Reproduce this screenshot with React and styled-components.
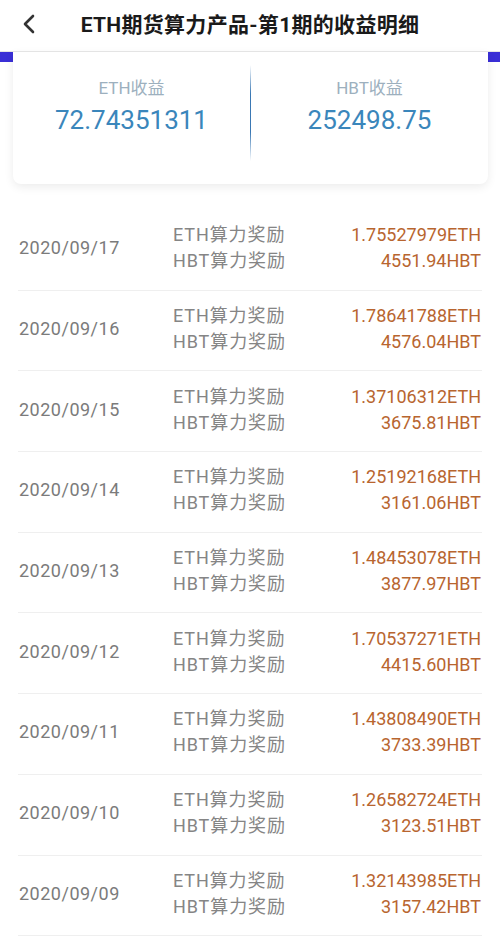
import React from 'react';
import styled, { createGlobalStyle } from 'styled-components';

const GlobalStyle = createGlobalStyle`
  body {
    margin: 0;
    background: #ffffff;
    font-family: Roboto, "Noto Sans CJK SC", sans-serif;
  }
`;

const Page = styled.div`
  width: 500px;
  min-height: 937px;
  background: #ffffff;
  overflow: hidden;
`;

const Header = styled.header`
  height: 51px;
  border-bottom: 1px solid #e4e4e4;
  display: flex;
  align-items: center;
  justify-content: center;
  position: relative;
`;

const BackButton = styled.button`
  position: absolute;
  left: 16px;
  top: 11px;
  width: 26px;
  height: 26px;
  padding: 0;
  border: none;
  background: transparent;
  display: flex;
  align-items: center;
  justify-content: center;
`;

const Title = styled.h1`
  margin: -5px 0 0;
  font-size: 21px;
  font-weight: 700;
  color: #1a1a1a;
  letter-spacing: 0.3px;
`;

const Banner = styled.div`
  background: linear-gradient(#3a2fd6 0 10px, transparent 10px);
  padding: 0 12px 0 13px;
`;

const SummaryCard = styled.section`
  height: 132px;
  background: #ffffff;
  border-radius: 0 0 8px 8px;
  box-shadow: 0 3px 10px rgba(0, 0, 0, 0.08);
  display: grid;
  grid-template-columns: 1fr 1px 1fr;
  align-items: start;
`;

const Stat = styled.div`
  display: flex;
  flex-direction: column;
  align-items: center;
  padding-top: 24px;
`;

const StatLabel = styled.span`
  font-size: 17px;
  color: #9db0be;
  line-height: 24px;
`;

const StatValue = styled.span`
  font-size: 26px;
  color: #3a86bb;
  line-height: 32px;
  margin-top: 4px;
`;

const Divider = styled.div`
  width: 1px;
  height: 96px;
  margin-top: 13px;
  background: linear-gradient(
    rgba(58, 122, 184, 0),
    #3a78b4 30%,
    #3a78b4 70%,
    rgba(58, 122, 184, 0)
  );
`;

const List = styled.ul`
  list-style: none;
  margin: 26px 0 0;
  padding: 0;
`;

const Row = styled.li`
  height: 79.7px;
  margin: 0 18px;
  border-bottom: 1px solid #efefef;
  display: grid;
  grid-template-columns: 154px 1fr auto;
  align-items: center;
  padding: 0 1px;
`;

const DateText = styled.span`
  font-size: 18px;
  color: #7b7b7b;
  letter-spacing: 0.5px;
  margin-top: -4px;
`;

const Lines = styled.div`
  display: flex;
  flex-direction: column;
  align-items: ${(p) => (p.$right ? 'flex-end' : 'flex-start')};
  margin-top: -3px;
`;

const Line = styled.span`
  font-size: 18px;
  line-height: 26px;
  color: ${(p) => p.$color};
  letter-spacing: ${(p) => p.$spacing || '0'};
`;

const rows = [
  ['2020/09/17', '1.75527979', '4551.94'],
  ['2020/09/16', '1.78641788', '4576.04'],
  ['2020/09/15', '1.37106312', '3675.81'],
  ['2020/09/14', '1.25192168', '3161.06'],
  ['2020/09/13', '1.48453078', '3877.97'],
  ['2020/09/12', '1.70537271', '4415.60'],
  ['2020/09/11', '1.43808490', '3733.39'],
  ['2020/09/10', '1.26582724', '3123.51'],
  ['2020/09/09', '1.32143985', '3157.42'],
];

const App = () => {
  return (
    <Page>
      <GlobalStyle />
      <Header>
        <BackButton aria-label="back">
          <svg width="14" height="20" viewBox="0 0 14 20">
            <path
              d="M11 2 L3 10 L11 18"
              fill="none"
              stroke="#333"
              strokeWidth="2.6"
              strokeLinecap="round"
              strokeLinejoin="round"
            />
          </svg>
        </BackButton>
        <Title>ETH期货算力产品-第1期的收益明细</Title>
      </Header>
      <Banner>
        <SummaryCard>
          <Stat>
            <StatLabel>ETH收益</StatLabel>
            <StatValue>72.74351311</StatValue>
          </Stat>
          <Divider />
          <Stat>
            <StatLabel>HBT收益</StatLabel>
            <StatValue>252498.75</StatValue>
          </Stat>
        </SummaryCard>
      </Banner>
      <List>
        {rows.map(([date, eth, hbt]) => (
          <Row key={date}>
            <DateText>{date}</DateText>
            <Lines>
              <Line $color="#858585" $spacing="0.9px">ETH算力奖励</Line>
              <Line $color="#858585" $spacing="0.9px">HBT算力奖励</Line>
            </Lines>
            <Lines $right>
              <Line $color="#b8652f">{eth}ETH</Line>
              <Line $color="#b8652f">{hbt}HBT</Line>
            </Lines>
          </Row>
        ))}
      </List>
    </Page>
  );
};

export default App;
